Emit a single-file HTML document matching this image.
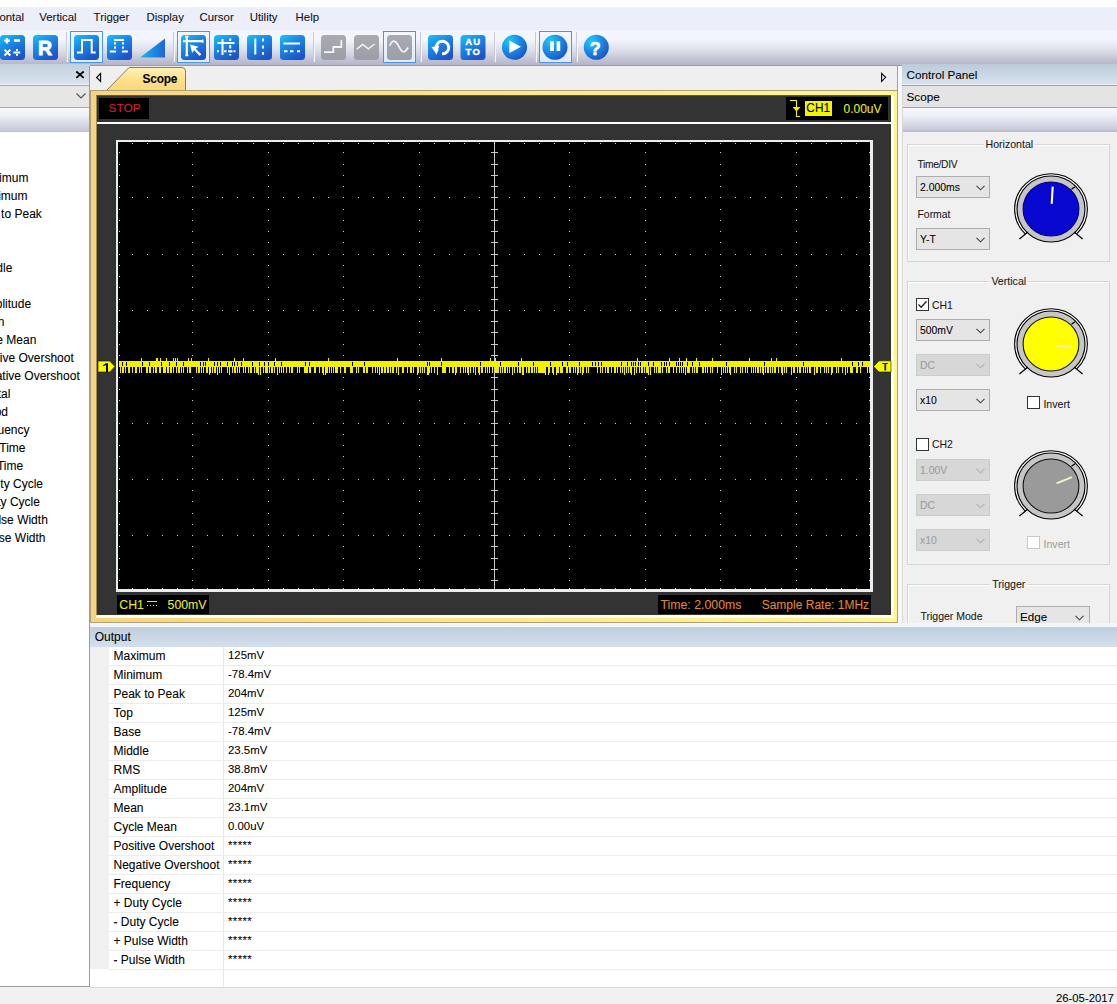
<!DOCTYPE html><html><head><meta charset="utf-8"><style>
html,body{margin:0;padding:0;}
body{width:1117px;height:1004px;overflow:hidden;position:relative;background:#f0f0f0;font-family:"Liberation Sans",sans-serif;}
.t{position:absolute;line-height:1;white-space:nowrap;-webkit-text-stroke:0.08px currentColor;}
.r{position:absolute;box-sizing:border-box;}
svg{position:absolute;overflow:visible;}
</style></head><body>

<div class="r" style="left:0px;top:0px;width:1117px;height:7px;background:#fdfdfe"></div>
<div class="r" style="left:0px;top:7px;width:1117px;height:23px;background:#eceef9"></div>
<div class="r" style="left:0px;top:30px;width:1117px;height:35px;background:linear-gradient(#f3f5fc 0px,#f4f6fc 9px,#eef0f8 12px,#d8dae6 22px,#c0c2d2 30px,#b4b6ca 35px)"></div>
<div class="r" style="left:90px;top:65px;width:812px;height:1px;background:#9a9aa6"></div>
<div class="t " style="left:-0.60px;top:12.25px;font-size:11.4px;color:#101018;">ontal</div>
<div class="t " style="left:39.30px;top:12.25px;font-size:11.4px;color:#101018;">Vertical</div>
<div class="t " style="left:93.60px;top:12.25px;font-size:11.4px;color:#101018;">Trigger</div>
<div class="t " style="left:146.50px;top:12.25px;font-size:11.4px;color:#101018;">Display</div>
<div class="t " style="left:199.50px;top:12.25px;font-size:11.4px;color:#101018;">Cursor</div>
<div class="t " style="left:249.70px;top:12.25px;font-size:11.4px;color:#101018;">Utility</div>
<div class="t " style="left:295.60px;top:12.25px;font-size:11.4px;color:#101018;">Help</div>
<svg style="left:0px;top:0px" width="1117" height="66" viewBox="0 0 1117 66">
<defs>
<linearGradient id="bl" x1="0" y1="0" x2="0.6" y2="1"><stop offset="0" stop-color="#19c3fb"/><stop offset="0.45" stop-color="#1a88e6"/><stop offset="1" stop-color="#1d55c6"/></linearGradient>
<linearGradient id="gr" x1="0" y1="0" x2="0" y2="1"><stop offset="0" stop-color="#a9aab2"/><stop offset="1" stop-color="#9c9da6"/></linearGradient>
<linearGradient id="sel" x1="0" y1="0" x2="0" y2="1"><stop offset="0" stop-color="#f4f8fe"/><stop offset="1" stop-color="#dfeaf8"/></linearGradient>
<radialGradient id="cb" cx="0.3" cy="0.25" r="0.85"><stop offset="0" stop-color="#20c8ff"/><stop offset="0.5" stop-color="#1a8ae8"/><stop offset="1" stop-color="#1c50c0"/></radialGradient>
</defs>
<rect x="66.0" y="32" width="1" height="30" fill="#c8cad6"/><rect x="67.0" y="32" width="1" height="30" fill="#f4f5fb"/>
<rect x="173.0" y="32" width="1" height="30" fill="#c8cad6"/><rect x="174.0" y="32" width="1" height="30" fill="#f4f5fb"/>
<rect x="313.0" y="32" width="1" height="30" fill="#c8cad6"/><rect x="314.0" y="32" width="1" height="30" fill="#f4f5fb"/>
<rect x="420.0" y="32" width="1" height="30" fill="#c8cad6"/><rect x="421.0" y="32" width="1" height="30" fill="#f4f5fb"/>
<rect x="494.0" y="32" width="1" height="30" fill="#c8cad6"/><rect x="495.0" y="32" width="1" height="30" fill="#f4f5fb"/>
<rect x="535.0" y="32" width="1" height="30" fill="#c8cad6"/><rect x="536.0" y="32" width="1" height="30" fill="#f4f5fb"/>
<rect x="576.0" y="32" width="1" height="30" fill="#c8cad6"/><rect x="577.0" y="32" width="1" height="30" fill="#f4f5fb"/>
<rect x="70.5" y="31.5" width="32" height="31" fill="url(#sel)" stroke="#4d94e6" stroke-width="1"/>
<rect x="177.5" y="31.5" width="32" height="31" fill="url(#sel)" stroke="#4d94e6" stroke-width="1"/>
<rect x="383.5" y="31.5" width="32" height="31" fill="url(#sel)" stroke="#4d94e6" stroke-width="1"/>
<rect x="539.5" y="31.5" width="32" height="31" fill="url(#sel)" stroke="#4d94e6" stroke-width="1"/>
<rect x="0" y="35" width="25" height="25" rx="3.5" fill="url(#bl)"/>
<path d="M4.2 40.7h5.7M7 38v5.4M14 40.5h6" stroke="#ffffff" stroke-width="2.3"/>
<path d="M4.5 49.6l5.8 5.9M10.3 49.6l-5.8 5.9M13.4 52.5h6.8" stroke="#ffffff" stroke-width="2"/><rect x="16" y="49" width="2" height="2" fill="#ffffff"/><rect x="16" y="53.8" width="2" height="2" fill="#ffffff"/>
<rect x="33" y="35" width="25" height="25" rx="3.5" fill="url(#bl)"/>
<text x="38" y="55.3" font-family="Liberation Sans" font-weight="bold" font-size="19.5" fill="#ffffff" stroke="#ffffff" stroke-width="0.9">R</text>
<rect x="74" y="35" width="25" height="25" rx="3.5" fill="url(#bl)"/>
<path d="M77 52.5h5v-12.5h9.7v12.5h4" stroke="#ffffff" stroke-width="2" fill="none"/>
<rect x="107" y="35" width="25" height="25" rx="3.5" fill="url(#bl)"/>
<path d="M114.2 40h9.7M109.8 51.5h6.3M121.9 51.5h6M115 42.3v2.2M115 46.6v2.1M123 42.3v2.2M123 46.6v2.1" stroke="#ffffff" stroke-width="2"/>
<linearGradient id="rg" x1="0" y1="0" x2="1" y2="0"><stop offset="0" stop-color="#1ab8f4"/><stop offset="1" stop-color="#1e66d4"/></linearGradient><path d="M140 57.5L165 38.5V57.5Z" fill="url(#rg)"/>
<rect x="181" y="35" width="25" height="25" rx="3.5" fill="url(#bl)"/>
<path d="M186.8 36.5v19M183 41.2h20" stroke="#ffffff" stroke-width="2.2"/><path d="M185.2 36.5h3.2M185.2 55.5h3.2M202.8 39.6v3.2" stroke="#ffffff" stroke-width="1.5"/>
<path d="M190 44.5l8.5 2.2-2.8 2 5.6 5.6-1.6 1.6-5.6-5.6-2 2.8z" fill="#ffffff"/>
<rect x="214" y="35" width="25" height="25" rx="3.5" fill="url(#bl)"/>
<path d="M222.5 39v16M217.5 43h17" stroke="#ffffff" stroke-width="2"/>
<path d="M230.2 38.5v2.5M230.2 45v3.5M230.2 50.5v2M230.2 54v1.5M217 51.2h2M224 51.2h2.5M228 51.2h4.5M233.5 51.2h2" stroke="#ffffff" stroke-width="2"/>
<rect x="247" y="35" width="25" height="25" rx="3.5" fill="url(#bl)"/>
<path d="M255.3 38.5v16" stroke="#ffffff" stroke-width="2"/><path d="M263 38.5v3M263 45.5v3M263 52v2.7" stroke="#ffffff" stroke-width="2"/>
<rect x="280" y="35" width="25" height="25" rx="3.5" fill="url(#bl)"/>
<path d="M283.5 43.5h16.5" stroke="#ffffff" stroke-width="2"/><path d="M284 51.2h3.5M290 51.2h3.5M297 51.2h3" stroke="#ffffff" stroke-width="2"/>
<rect x="321" y="35" width="25" height="25" rx="3.5" fill="url(#gr)"/>
<path d="M324 52.2h9.3v-5.2h8v-6.8" stroke="#f4f4f6" stroke-width="1.8" fill="none"/>
<rect x="354" y="35" width="25" height="25" rx="3.5" fill="url(#gr)"/>
<path d="M356.7 49.2L362.7 44.5L368.3 48.8L374.7 44" stroke="#f4f4f6" stroke-width="1.5" fill="none"/>
<rect x="387" y="35" width="25" height="25" rx="3.5" fill="url(#gr)"/>
<path d="M389.7 45.7C391 42 393 40.5 395 41.5C397.5 43 399 47 401 50C402.5 52 404.5 52.5 406 50.5C407 49.3 407.8 48.3 408.2 47.5" stroke="#f4f4f6" stroke-width="1.7" fill="none"/>
<rect x="428" y="35" width="25" height="25" rx="3.5" fill="url(#bl)"/>
<path d="M437.4 51.3A6.3 6.3 0 1 1 442 53.8" stroke="#ffffff" stroke-width="3" fill="none"/><path d="M431.5 47l7.8-1.2-2.7 9z" fill="#ffffff"/>
<rect x="460.5" y="35" width="25" height="25" rx="3.5" fill="url(#bl)"/>
<text x="465.3" y="44.8" font-family="Liberation Sans" font-weight="bold" font-size="9.5" fill="#ffffff" stroke="#ffffff" stroke-width="0.4" letter-spacing="1">AU</text>
<text x="465.6" y="54.8" font-family="Liberation Sans" font-weight="bold" font-size="9.5" fill="#ffffff" stroke="#ffffff" stroke-width="0.4" letter-spacing="1.2">TO</text>
<circle cx="514.5" cy="47.3" r="12.5" fill="url(#cb)"/>
<path d="M509.4 40.6v12.4l11.6-6.2z" fill="#ffffff"/>
<circle cx="555" cy="47.3" r="12.5" fill="url(#cb)"/>
<rect x="550.2" y="41.2" width="3.7" height="9.8" fill="#ffffff"/><rect x="556.6" y="41.2" width="3.6" height="9.8" fill="#ffffff"/>
<circle cx="596.3" cy="47.3" r="12.5" fill="url(#cb)"/>
<text x="589.7" y="54.5" font-family="Liberation Sans" font-weight="bold" font-size="18" fill="#ffffff" stroke="#ffffff" stroke-width="0.6">?</text>
</svg>
<div class="r" style="left:0px;top:64px;width:90px;height:20px;background:linear-gradient(#c4d0dc,#d9e3ef)"></div>
<div class="r" style="left:0px;top:84px;width:90px;height:1px;background:#eef2f8"></div>
<div class="r" style="left:0px;top:85px;width:90px;height:1px;background:#a5a9b0"></div>
<div class="r" style="left:0px;top:86px;width:90px;height:21px;background:#e6e6e6"></div>
<div class="r" style="left:0px;top:107px;width:90px;height:1px;background:#a8a8a8"></div>
<div class="r" style="left:0px;top:108px;width:90px;height:24px;background:linear-gradient(#f9f9fd,#eef0f6 30%,#c6c8d6 95%,#b8bac8)"></div>
<div class="r" style="left:0px;top:132px;width:89px;height:854px;background:#ffffff"></div>
<div class="r" style="left:0px;top:986px;width:90px;height:1px;background:#9c9c9c"></div>
<div class="r" style="left:89px;top:66px;width:1px;height:921px;background:#9c9ca4"></div>
<svg style="left:75px;top:70px" width="10" height="9" viewBox="0 0 10 9"><path d="M1.3 1.5 L8.7 7.9 M8.7 1.5 L1.3 7.9" stroke="#000" stroke-width="1.7"/></svg>
<svg style="left:76px;top:93px" width="10" height="6" viewBox="0 0 10 6"><path d="M0.5 0.5 L5 5 L9.5 0.5" stroke="#555" stroke-width="1.2" fill="none"/></svg>
<div style="position:absolute;left:0;top:132px;width:89px;height:854px;overflow:hidden">
<div class="t " style="left:-0.93px;top:40.14px;font-size:12px;color:#000;">imum</div>
<div class="t " style="left:-1.83px;top:58.14px;font-size:12px;color:#000;">imum</div>
<div class="t " style="left:1.11px;top:76.14px;font-size:12px;color:#000;">to Peak</div>
<div class="t " style="left:-3.71px;top:130.14px;font-size:12px;color:#000;">dle</div>
<div class="t " style="left:-4.26px;top:166.14px;font-size:12px;color:#000;">plitude</div>
<div class="t " style="left:-2.17px;top:184.14px;font-size:12px;color:#000;">n</div>
<div class="t " style="left:-3.73px;top:202.14px;font-size:12px;color:#000;">e Mean</div>
<div class="t " style="left:-3.57px;top:220.14px;font-size:12px;color:#000;">tive Overshoot</div>
<div class="t " style="left:-4.34px;top:238.14px;font-size:12px;color:#000;">ative Overshoot</div>
<div class="t " style="left:-2.27px;top:256.14px;font-size:12px;color:#000;">tal</div>
<div class="t " style="left:-5.35px;top:274.14px;font-size:12px;color:#000;">od</div>
<div class="t " style="left:-2.52px;top:292.14px;font-size:12px;color:#000;">uency</div>
<div class="t " style="left:-0.72px;top:310.14px;font-size:12px;color:#000;">Time</div>
<div class="t " style="left:-3.12px;top:328.14px;font-size:12px;color:#000;">Time</div>
<div class="t " style="left:0.33px;top:346.14px;font-size:12px;color:#000;">ty Cycle</div>
<div class="t " style="left:-2.77px;top:364.14px;font-size:12px;color:#000;">ty Cycle</div>
<div class="t " style="left:-1.55px;top:382.14px;font-size:12px;color:#000;">lse Width</div>
<div class="t " style="left:-1.18px;top:400.14px;font-size:12px;color:#000;">se Width</div>
</div>
<div class="r" style="left:90px;top:66px;width:808px;height:24px;background:#efefef"></div>
<div class="r" style="left:897px;top:66px;width:1px;height:24px;background:#a0a0a0"></div>
<svg style="left:95px;top:72px" width="8" height="11" viewBox="0 0 8 11"><path d="M5.6 1.5 L1.6 5.5 L5.6 9.5 Z" stroke="#000" stroke-width="1.1" fill="none"/></svg>
<svg style="left:880px;top:72px" width="8" height="11" viewBox="0 0 8 11"><path d="M1.6 1.3 L5.6 5.3 L1.6 9.3 Z" stroke="#000" stroke-width="1.1" fill="none"/></svg>
<svg style="left:105px;top:66px" width="84" height="26" viewBox="0 0 84 26"><defs><linearGradient id="tg" x1="0" y1="0" x2="0" y2="1"><stop offset="0" stop-color="#fff3b8"/><stop offset="0.5" stop-color="#fde08e"/><stop offset="1" stop-color="#fbd57a"/></linearGradient></defs><path d="M1 25 L24 1.5 L77 1.5 Q80.5 1.5 80.5 5 L80.5 25 Z" fill="url(#tg)" stroke="#8a7c58" stroke-width="1"/></svg>
<div class="t " style="left:142.50px;top:73.63px;font-size:11.9px;color:#000;font-weight:bold;letter-spacing:-0.2px">Scope</div>
<div class="r" style="left:90px;top:90px;width:808px;height:533px;background:linear-gradient(90deg,#f9d47e,#fde68a 50%,#fdf692);border:1px solid #aca178"></div>
<div class="r" style="left:891px;top:95px;width:3px;height:523px;background:#fffff0"></div>
<div class="r" style="left:96px;top:615px;width:798px;height:3px;background:#fffff0"></div>
<div class="r" style="left:96px;top:95px;width:795px;height:520px;background:#333333;border-left:1px solid #9c8a5c;border-top:1px solid #55585e"></div>
<div class="r" style="left:99px;top:98px;width:50px;height:21px;background:#000"></div>
<div class="t " style="left:108.60px;top:103.11px;font-size:11.8px;color:#d82030;">STOP</div>
<div class="r" style="left:786px;top:97px;width:102px;height:23px;background:#000"></div>
<svg style="left:788px;top:99px" width="14" height="20" viewBox="0 0 14 20"><path d="M2 1.5 H8.5 V17.5 H12" stroke="#f0f000" stroke-width="1.1" fill="none"/><path d="M4.5 8 H12.5 L8.5 12.5 Z" fill="#f0f000"/></svg>
<div class="r" style="left:805px;top:101px;width:27px;height:15px;background:#f4f400"></div>
<div class="t " style="left:806.30px;top:103.03px;font-size:11.9px;color:#000;">CH1</div>
<div class="t " style="left:843.50px;top:102.94px;font-size:12px;color:#e8e820;">0.00uV</div>
<div class="r" style="left:97px;top:122px;width:794px;height:2px;background:#fcfcfc"></div>
<div class="r" style="left:117px;top:595px;width:92px;height:19px;background:#000"></div>
<div class="t " style="left:119.30px;top:598.79px;font-size:12.3px;color:#e8e830;">CH1</div>
<svg style="left:146px;top:598px" width="12" height="10" viewBox="0 0 12 10" shape-rendering="crispEdges"><path d="M1 3.5 H11" stroke="#e8e830" stroke-width="1"/><path d="M1 7.5 H2 M4 7.5 H5 M7 7.5 H8 M10 7.5 H11" stroke="#e8e830" stroke-width="1"/></svg>
<div class="t " style="left:167.60px;top:598.79px;font-size:12.3px;color:#e8e830;">500mV</div>
<div class="r" style="left:658px;top:595px;width:213px;height:19px;background:#000"></div>
<div class="t " style="left:660.50px;top:598.99px;font-size:12.3px;color:#e08838;">Time: 2.000ms</div>
<div class="t " style="left:761.70px;top:599.24px;font-size:12.0px;color:#e08838;">Sample Rate: 1MHz</div>
<svg style="left:0px;top:0px" width="1117" height="1004" shape-rendering="crispEdges"><rect x="116" y="140" width="757" height="452" fill="#ebebf0"/><rect x="118" y="142" width="752" height="447" fill="#000"/><path d="M132 143h1v1h-1zM132 588h1v1h-1zM132 197h1v1h-1zM132 254h1v1h-1zM132 310h1v1h-1zM132 423h1v1h-1zM132 479h1v1h-1zM132 535h1v1h-1zM147 143h1v1h-1zM147 588h1v1h-1zM147 197h1v1h-1zM147 254h1v1h-1zM147 310h1v1h-1zM147 423h1v1h-1zM147 479h1v1h-1zM147 535h1v1h-1zM162 143h1v1h-1zM162 588h1v1h-1zM162 197h1v1h-1zM162 254h1v1h-1zM162 310h1v1h-1zM162 423h1v1h-1zM162 479h1v1h-1zM162 535h1v1h-1zM177 143h1v1h-1zM177 588h1v1h-1zM177 197h1v1h-1zM177 254h1v1h-1zM177 310h1v1h-1zM177 423h1v1h-1zM177 479h1v1h-1zM177 535h1v1h-1zM192 143h1v1h-1zM192 588h1v1h-1zM207 143h1v1h-1zM207 588h1v1h-1zM207 197h1v1h-1zM207 254h1v1h-1zM207 310h1v1h-1zM207 423h1v1h-1zM207 479h1v1h-1zM207 535h1v1h-1zM222 143h1v1h-1zM222 588h1v1h-1zM222 197h1v1h-1zM222 254h1v1h-1zM222 310h1v1h-1zM222 423h1v1h-1zM222 479h1v1h-1zM222 535h1v1h-1zM237 143h1v1h-1zM237 588h1v1h-1zM237 197h1v1h-1zM237 254h1v1h-1zM237 310h1v1h-1zM237 423h1v1h-1zM237 479h1v1h-1zM237 535h1v1h-1zM253 143h1v1h-1zM253 588h1v1h-1zM253 197h1v1h-1zM253 254h1v1h-1zM253 310h1v1h-1zM253 423h1v1h-1zM253 479h1v1h-1zM253 535h1v1h-1zM268 143h1v1h-1zM268 588h1v1h-1zM283 143h1v1h-1zM283 588h1v1h-1zM283 197h1v1h-1zM283 254h1v1h-1zM283 310h1v1h-1zM283 423h1v1h-1zM283 479h1v1h-1zM283 535h1v1h-1zM298 143h1v1h-1zM298 588h1v1h-1zM298 197h1v1h-1zM298 254h1v1h-1zM298 310h1v1h-1zM298 423h1v1h-1zM298 479h1v1h-1zM298 535h1v1h-1zM313 143h1v1h-1zM313 588h1v1h-1zM313 197h1v1h-1zM313 254h1v1h-1zM313 310h1v1h-1zM313 423h1v1h-1zM313 479h1v1h-1zM313 535h1v1h-1zM328 143h1v1h-1zM328 588h1v1h-1zM328 197h1v1h-1zM328 254h1v1h-1zM328 310h1v1h-1zM328 423h1v1h-1zM328 479h1v1h-1zM328 535h1v1h-1zM343 143h1v1h-1zM343 588h1v1h-1zM358 143h1v1h-1zM358 588h1v1h-1zM358 197h1v1h-1zM358 254h1v1h-1zM358 310h1v1h-1zM358 423h1v1h-1zM358 479h1v1h-1zM358 535h1v1h-1zM373 143h1v1h-1zM373 588h1v1h-1zM373 197h1v1h-1zM373 254h1v1h-1zM373 310h1v1h-1zM373 423h1v1h-1zM373 479h1v1h-1zM373 535h1v1h-1zM388 143h1v1h-1zM388 588h1v1h-1zM388 197h1v1h-1zM388 254h1v1h-1zM388 310h1v1h-1zM388 423h1v1h-1zM388 479h1v1h-1zM388 535h1v1h-1zM403 143h1v1h-1zM403 588h1v1h-1zM403 197h1v1h-1zM403 254h1v1h-1zM403 310h1v1h-1zM403 423h1v1h-1zM403 479h1v1h-1zM403 535h1v1h-1zM419 143h1v1h-1zM419 588h1v1h-1zM434 143h1v1h-1zM434 588h1v1h-1zM434 197h1v1h-1zM434 254h1v1h-1zM434 310h1v1h-1zM434 423h1v1h-1zM434 479h1v1h-1zM434 535h1v1h-1zM449 143h1v1h-1zM449 588h1v1h-1zM449 197h1v1h-1zM449 254h1v1h-1zM449 310h1v1h-1zM449 423h1v1h-1zM449 479h1v1h-1zM449 535h1v1h-1zM464 143h1v1h-1zM464 588h1v1h-1zM464 197h1v1h-1zM464 254h1v1h-1zM464 310h1v1h-1zM464 423h1v1h-1zM464 479h1v1h-1zM464 535h1v1h-1zM479 143h1v1h-1zM479 588h1v1h-1zM479 197h1v1h-1zM479 254h1v1h-1zM479 310h1v1h-1zM479 423h1v1h-1zM479 479h1v1h-1zM479 535h1v1h-1zM494 143h1v1h-1zM494 588h1v1h-1zM509 143h1v1h-1zM509 588h1v1h-1zM509 197h1v1h-1zM509 254h1v1h-1zM509 310h1v1h-1zM509 423h1v1h-1zM509 479h1v1h-1zM509 535h1v1h-1zM524 143h1v1h-1zM524 588h1v1h-1zM524 197h1v1h-1zM524 254h1v1h-1zM524 310h1v1h-1zM524 423h1v1h-1zM524 479h1v1h-1zM524 535h1v1h-1zM539 143h1v1h-1zM539 588h1v1h-1zM539 197h1v1h-1zM539 254h1v1h-1zM539 310h1v1h-1zM539 423h1v1h-1zM539 479h1v1h-1zM539 535h1v1h-1zM554 143h1v1h-1zM554 588h1v1h-1zM554 197h1v1h-1zM554 254h1v1h-1zM554 310h1v1h-1zM554 423h1v1h-1zM554 479h1v1h-1zM554 535h1v1h-1zM569 143h1v1h-1zM569 588h1v1h-1zM584 143h1v1h-1zM584 588h1v1h-1zM584 197h1v1h-1zM584 254h1v1h-1zM584 310h1v1h-1zM584 423h1v1h-1zM584 479h1v1h-1zM584 535h1v1h-1zM600 143h1v1h-1zM600 588h1v1h-1zM600 197h1v1h-1zM600 254h1v1h-1zM600 310h1v1h-1zM600 423h1v1h-1zM600 479h1v1h-1zM600 535h1v1h-1zM615 143h1v1h-1zM615 588h1v1h-1zM615 197h1v1h-1zM615 254h1v1h-1zM615 310h1v1h-1zM615 423h1v1h-1zM615 479h1v1h-1zM615 535h1v1h-1zM630 143h1v1h-1zM630 588h1v1h-1zM630 197h1v1h-1zM630 254h1v1h-1zM630 310h1v1h-1zM630 423h1v1h-1zM630 479h1v1h-1zM630 535h1v1h-1zM645 143h1v1h-1zM645 588h1v1h-1zM660 143h1v1h-1zM660 588h1v1h-1zM660 197h1v1h-1zM660 254h1v1h-1zM660 310h1v1h-1zM660 423h1v1h-1zM660 479h1v1h-1zM660 535h1v1h-1zM675 143h1v1h-1zM675 588h1v1h-1zM675 197h1v1h-1zM675 254h1v1h-1zM675 310h1v1h-1zM675 423h1v1h-1zM675 479h1v1h-1zM675 535h1v1h-1zM690 143h1v1h-1zM690 588h1v1h-1zM690 197h1v1h-1zM690 254h1v1h-1zM690 310h1v1h-1zM690 423h1v1h-1zM690 479h1v1h-1zM690 535h1v1h-1zM705 143h1v1h-1zM705 588h1v1h-1zM705 197h1v1h-1zM705 254h1v1h-1zM705 310h1v1h-1zM705 423h1v1h-1zM705 479h1v1h-1zM705 535h1v1h-1zM720 143h1v1h-1zM720 588h1v1h-1zM735 143h1v1h-1zM735 588h1v1h-1zM735 197h1v1h-1zM735 254h1v1h-1zM735 310h1v1h-1zM735 423h1v1h-1zM735 479h1v1h-1zM735 535h1v1h-1zM750 143h1v1h-1zM750 588h1v1h-1zM750 197h1v1h-1zM750 254h1v1h-1zM750 310h1v1h-1zM750 423h1v1h-1zM750 479h1v1h-1zM750 535h1v1h-1zM765 143h1v1h-1zM765 588h1v1h-1zM765 197h1v1h-1zM765 254h1v1h-1zM765 310h1v1h-1zM765 423h1v1h-1zM765 479h1v1h-1zM765 535h1v1h-1zM781 143h1v1h-1zM781 588h1v1h-1zM781 197h1v1h-1zM781 254h1v1h-1zM781 310h1v1h-1zM781 423h1v1h-1zM781 479h1v1h-1zM781 535h1v1h-1zM796 143h1v1h-1zM796 588h1v1h-1zM811 143h1v1h-1zM811 588h1v1h-1zM811 197h1v1h-1zM811 254h1v1h-1zM811 310h1v1h-1zM811 423h1v1h-1zM811 479h1v1h-1zM811 535h1v1h-1zM826 143h1v1h-1zM826 588h1v1h-1zM826 197h1v1h-1zM826 254h1v1h-1zM826 310h1v1h-1zM826 423h1v1h-1zM826 479h1v1h-1zM826 535h1v1h-1zM841 143h1v1h-1zM841 588h1v1h-1zM841 197h1v1h-1zM841 254h1v1h-1zM841 310h1v1h-1zM841 423h1v1h-1zM841 479h1v1h-1zM841 535h1v1h-1zM856 143h1v1h-1zM856 588h1v1h-1zM856 197h1v1h-1zM856 254h1v1h-1zM856 310h1v1h-1zM856 423h1v1h-1zM856 479h1v1h-1zM856 535h1v1h-1zM119 152h1v1h-1zM869 152h1v1h-1zM192 152h1v1h-1zM268 152h1v1h-1zM343 152h1v1h-1zM419 152h1v1h-1zM569 152h1v1h-1zM645 152h1v1h-1zM720 152h1v1h-1zM796 152h1v1h-1zM119 164h1v1h-1zM869 164h1v1h-1zM192 164h1v1h-1zM268 164h1v1h-1zM343 164h1v1h-1zM419 164h1v1h-1zM569 164h1v1h-1zM645 164h1v1h-1zM720 164h1v1h-1zM796 164h1v1h-1zM119 175h1v1h-1zM869 175h1v1h-1zM192 175h1v1h-1zM268 175h1v1h-1zM343 175h1v1h-1zM419 175h1v1h-1zM569 175h1v1h-1zM645 175h1v1h-1zM720 175h1v1h-1zM796 175h1v1h-1zM119 186h1v1h-1zM869 186h1v1h-1zM192 186h1v1h-1zM268 186h1v1h-1zM343 186h1v1h-1zM419 186h1v1h-1zM569 186h1v1h-1zM645 186h1v1h-1zM720 186h1v1h-1zM796 186h1v1h-1zM119 197h1v1h-1zM869 197h1v1h-1zM119 209h1v1h-1zM869 209h1v1h-1zM192 209h1v1h-1zM268 209h1v1h-1zM343 209h1v1h-1zM419 209h1v1h-1zM569 209h1v1h-1zM645 209h1v1h-1zM720 209h1v1h-1zM796 209h1v1h-1zM119 220h1v1h-1zM869 220h1v1h-1zM192 220h1v1h-1zM268 220h1v1h-1zM343 220h1v1h-1zM419 220h1v1h-1zM569 220h1v1h-1zM645 220h1v1h-1zM720 220h1v1h-1zM796 220h1v1h-1zM119 231h1v1h-1zM869 231h1v1h-1zM192 231h1v1h-1zM268 231h1v1h-1zM343 231h1v1h-1zM419 231h1v1h-1zM569 231h1v1h-1zM645 231h1v1h-1zM720 231h1v1h-1zM796 231h1v1h-1zM119 242h1v1h-1zM869 242h1v1h-1zM192 242h1v1h-1zM268 242h1v1h-1zM343 242h1v1h-1zM419 242h1v1h-1zM569 242h1v1h-1zM645 242h1v1h-1zM720 242h1v1h-1zM796 242h1v1h-1zM119 254h1v1h-1zM869 254h1v1h-1zM119 265h1v1h-1zM869 265h1v1h-1zM192 265h1v1h-1zM268 265h1v1h-1zM343 265h1v1h-1zM419 265h1v1h-1zM569 265h1v1h-1zM645 265h1v1h-1zM720 265h1v1h-1zM796 265h1v1h-1zM119 276h1v1h-1zM869 276h1v1h-1zM192 276h1v1h-1zM268 276h1v1h-1zM343 276h1v1h-1zM419 276h1v1h-1zM569 276h1v1h-1zM645 276h1v1h-1zM720 276h1v1h-1zM796 276h1v1h-1zM119 287h1v1h-1zM869 287h1v1h-1zM192 287h1v1h-1zM268 287h1v1h-1zM343 287h1v1h-1zM419 287h1v1h-1zM569 287h1v1h-1zM645 287h1v1h-1zM720 287h1v1h-1zM796 287h1v1h-1zM119 299h1v1h-1zM869 299h1v1h-1zM192 299h1v1h-1zM268 299h1v1h-1zM343 299h1v1h-1zM419 299h1v1h-1zM569 299h1v1h-1zM645 299h1v1h-1zM720 299h1v1h-1zM796 299h1v1h-1zM119 310h1v1h-1zM869 310h1v1h-1zM119 321h1v1h-1zM869 321h1v1h-1zM192 321h1v1h-1zM268 321h1v1h-1zM343 321h1v1h-1zM419 321h1v1h-1zM569 321h1v1h-1zM645 321h1v1h-1zM720 321h1v1h-1zM796 321h1v1h-1zM119 332h1v1h-1zM869 332h1v1h-1zM192 332h1v1h-1zM268 332h1v1h-1zM343 332h1v1h-1zM419 332h1v1h-1zM569 332h1v1h-1zM645 332h1v1h-1zM720 332h1v1h-1zM796 332h1v1h-1zM119 344h1v1h-1zM869 344h1v1h-1zM192 344h1v1h-1zM268 344h1v1h-1zM343 344h1v1h-1zM419 344h1v1h-1zM569 344h1v1h-1zM645 344h1v1h-1zM720 344h1v1h-1zM796 344h1v1h-1zM119 355h1v1h-1zM869 355h1v1h-1zM192 355h1v1h-1zM268 355h1v1h-1zM343 355h1v1h-1zM419 355h1v1h-1zM569 355h1v1h-1zM645 355h1v1h-1zM720 355h1v1h-1zM796 355h1v1h-1zM119 366h1v1h-1zM869 366h1v1h-1zM119 377h1v1h-1zM869 377h1v1h-1zM192 377h1v1h-1zM268 377h1v1h-1zM343 377h1v1h-1zM419 377h1v1h-1zM569 377h1v1h-1zM645 377h1v1h-1zM720 377h1v1h-1zM796 377h1v1h-1zM119 389h1v1h-1zM869 389h1v1h-1zM192 389h1v1h-1zM268 389h1v1h-1zM343 389h1v1h-1zM419 389h1v1h-1zM569 389h1v1h-1zM645 389h1v1h-1zM720 389h1v1h-1zM796 389h1v1h-1zM119 400h1v1h-1zM869 400h1v1h-1zM192 400h1v1h-1zM268 400h1v1h-1zM343 400h1v1h-1zM419 400h1v1h-1zM569 400h1v1h-1zM645 400h1v1h-1zM720 400h1v1h-1zM796 400h1v1h-1zM119 411h1v1h-1zM869 411h1v1h-1zM192 411h1v1h-1zM268 411h1v1h-1zM343 411h1v1h-1zM419 411h1v1h-1zM569 411h1v1h-1zM645 411h1v1h-1zM720 411h1v1h-1zM796 411h1v1h-1zM119 423h1v1h-1zM869 423h1v1h-1zM119 434h1v1h-1zM869 434h1v1h-1zM192 434h1v1h-1zM268 434h1v1h-1zM343 434h1v1h-1zM419 434h1v1h-1zM569 434h1v1h-1zM645 434h1v1h-1zM720 434h1v1h-1zM796 434h1v1h-1zM119 445h1v1h-1zM869 445h1v1h-1zM192 445h1v1h-1zM268 445h1v1h-1zM343 445h1v1h-1zM419 445h1v1h-1zM569 445h1v1h-1zM645 445h1v1h-1zM720 445h1v1h-1zM796 445h1v1h-1zM119 456h1v1h-1zM869 456h1v1h-1zM192 456h1v1h-1zM268 456h1v1h-1zM343 456h1v1h-1zM419 456h1v1h-1zM569 456h1v1h-1zM645 456h1v1h-1zM720 456h1v1h-1zM796 456h1v1h-1zM119 468h1v1h-1zM869 468h1v1h-1zM192 468h1v1h-1zM268 468h1v1h-1zM343 468h1v1h-1zM419 468h1v1h-1zM569 468h1v1h-1zM645 468h1v1h-1zM720 468h1v1h-1zM796 468h1v1h-1zM119 479h1v1h-1zM869 479h1v1h-1zM119 490h1v1h-1zM869 490h1v1h-1zM192 490h1v1h-1zM268 490h1v1h-1zM343 490h1v1h-1zM419 490h1v1h-1zM569 490h1v1h-1zM645 490h1v1h-1zM720 490h1v1h-1zM796 490h1v1h-1zM119 501h1v1h-1zM869 501h1v1h-1zM192 501h1v1h-1zM268 501h1v1h-1zM343 501h1v1h-1zM419 501h1v1h-1zM569 501h1v1h-1zM645 501h1v1h-1zM720 501h1v1h-1zM796 501h1v1h-1zM119 513h1v1h-1zM869 513h1v1h-1zM192 513h1v1h-1zM268 513h1v1h-1zM343 513h1v1h-1zM419 513h1v1h-1zM569 513h1v1h-1zM645 513h1v1h-1zM720 513h1v1h-1zM796 513h1v1h-1zM119 524h1v1h-1zM869 524h1v1h-1zM192 524h1v1h-1zM268 524h1v1h-1zM343 524h1v1h-1zM419 524h1v1h-1zM569 524h1v1h-1zM645 524h1v1h-1zM720 524h1v1h-1zM796 524h1v1h-1zM119 535h1v1h-1zM869 535h1v1h-1zM119 546h1v1h-1zM869 546h1v1h-1zM192 546h1v1h-1zM268 546h1v1h-1zM343 546h1v1h-1zM419 546h1v1h-1zM569 546h1v1h-1zM645 546h1v1h-1zM720 546h1v1h-1zM796 546h1v1h-1zM119 558h1v1h-1zM869 558h1v1h-1zM192 558h1v1h-1zM268 558h1v1h-1zM343 558h1v1h-1zM419 558h1v1h-1zM569 558h1v1h-1zM645 558h1v1h-1zM720 558h1v1h-1zM796 558h1v1h-1zM119 569h1v1h-1zM869 569h1v1h-1zM192 569h1v1h-1zM268 569h1v1h-1zM343 569h1v1h-1zM419 569h1v1h-1zM569 569h1v1h-1zM645 569h1v1h-1zM720 569h1v1h-1zM796 569h1v1h-1zM119 580h1v1h-1zM869 580h1v1h-1zM192 580h1v1h-1zM268 580h1v1h-1zM343 580h1v1h-1zM419 580h1v1h-1zM569 580h1v1h-1zM645 580h1v1h-1zM720 580h1v1h-1zM796 580h1v1h-1zM192 197h1v1h-1zM192 254h1v1h-1zM192 310h1v1h-1zM192 423h1v1h-1zM192 479h1v1h-1zM192 535h1v1h-1zM268 197h1v1h-1zM268 254h1v1h-1zM268 310h1v1h-1zM268 423h1v1h-1zM268 479h1v1h-1zM268 535h1v1h-1zM343 197h1v1h-1zM343 254h1v1h-1zM343 310h1v1h-1zM343 423h1v1h-1zM343 479h1v1h-1zM343 535h1v1h-1zM419 197h1v1h-1zM419 254h1v1h-1zM419 310h1v1h-1zM419 423h1v1h-1zM419 479h1v1h-1zM419 535h1v1h-1zM569 197h1v1h-1zM569 254h1v1h-1zM569 310h1v1h-1zM569 423h1v1h-1zM569 479h1v1h-1zM569 535h1v1h-1zM645 197h1v1h-1zM645 254h1v1h-1zM645 310h1v1h-1zM645 423h1v1h-1zM645 479h1v1h-1zM645 535h1v1h-1zM720 197h1v1h-1zM720 254h1v1h-1zM720 310h1v1h-1zM720 423h1v1h-1zM720 479h1v1h-1zM720 535h1v1h-1zM796 197h1v1h-1zM796 254h1v1h-1zM796 310h1v1h-1zM796 423h1v1h-1zM796 479h1v1h-1zM796 535h1v1h-1z" fill="#d0d0d0"/><rect x="494" y="142" width="1" height="447" fill="#c8c8c8"/><rect x="119" y="366" width="751" height="1" fill="#c8c8c8"/><path d="M491 152h7v1h-7zM491 164h7v1h-7zM491 175h7v1h-7zM491 186h7v1h-7zM491 197h7v1h-7zM491 209h7v1h-7zM491 220h7v1h-7zM491 231h7v1h-7zM491 242h7v1h-7zM491 254h7v1h-7zM491 265h7v1h-7zM491 276h7v1h-7zM491 287h7v1h-7zM491 299h7v1h-7zM491 310h7v1h-7zM491 321h7v1h-7zM491 332h7v1h-7zM491 344h7v1h-7zM491 355h7v1h-7zM491 366h7v1h-7zM491 377h7v1h-7zM491 389h7v1h-7zM491 400h7v1h-7zM491 411h7v1h-7zM491 423h7v1h-7zM491 434h7v1h-7zM491 445h7v1h-7zM491 456h7v1h-7zM491 468h7v1h-7zM491 479h7v1h-7zM491 490h7v1h-7zM491 501h7v1h-7zM491 513h7v1h-7zM491 524h7v1h-7zM491 535h7v1h-7zM491 546h7v1h-7zM491 558h7v1h-7zM491 569h7v1h-7zM491 580h7v1h-7z" fill="#c8c8c8"/><path d="M119 361h1v6h-1zM120 361h1v6h-1zM120 367h1v6h-1zM121 361h1v6h-1zM122 361h1v1h-1z M122 366h1v1h-1zM122 367h1v6h-1zM123 361h1v6h-1zM123 367h1v6h-1zM124 361h1v6h-1zM125 361h1v6h-1zM125 367h1v6h-1zM126 361h1v1h-1z M126 366h1v1h-1zM127 361h1v6h-1zM128 361h1v6h-1zM128 367h1v6h-1zM129 361h1v6h-1zM129 367h1v6h-1zM130 361h1v6h-1zM131 361h1v6h-1zM132 361h1v6h-1zM132 367h1v6h-1zM133 361h1v6h-1zM134 361h1v6h-1zM135 361h1v6h-1zM135 367h1v6h-1zM136 361h1v6h-1zM136 367h1v6h-1zM137 361h1v6h-1zM138 361h1v6h-1zM139 361h1v6h-1zM139 367h1v6h-1zM140 361h1v6h-1zM141 361h1v6h-1zM141 367h1v6h-1zM141 358h1v3h-1zM142 361h1v1h-1z M142 366h1v1h-1zM143 361h1v6h-1zM144 361h1v6h-1zM145 361h1v6h-1zM146 361h1v6h-1zM146 367h1v6h-1zM147 361h1v6h-1zM147 367h1v6h-1zM148 361h1v6h-1zM149 361h1v1h-1z M149 366h1v1h-1zM149 367h1v6h-1zM150 361h1v6h-1zM150 367h1v6h-1zM151 361h1v6h-1zM152 361h1v6h-1zM153 361h1v6h-1zM153 367h1v6h-1zM154 361h1v6h-1zM155 361h1v6h-1zM155 367h1v6h-1zM156 361h1v6h-1zM156 367h1v6h-1zM156 358h1v3h-1zM157 361h1v6h-1zM157 358h1v3h-1zM158 361h1v6h-1zM159 361h1v6h-1zM159 367h1v6h-1zM160 361h1v6h-1zM160 367h1v6h-1zM160 358h1v3h-1zM161 361h1v1h-1z M161 366h1v1h-1zM162 361h1v6h-1zM163 361h1v6h-1zM163 367h1v6h-1zM164 361h1v6h-1zM164 367h1v6h-1zM165 361h1v6h-1zM165 367h1v6h-1zM166 361h1v6h-1zM166 358h1v3h-1zM167 361h1v6h-1zM167 367h1v6h-1zM168 361h1v6h-1zM168 367h1v6h-1zM169 361h1v1h-1z M169 366h1v1h-1zM170 361h1v6h-1zM170 367h1v6h-1zM171 361h1v6h-1zM171 367h1v6h-1zM172 361h1v6h-1zM173 361h1v6h-1zM173 367h1v6h-1zM173 358h1v3h-1zM174 361h1v6h-1zM175 361h1v6h-1zM175 358h1v3h-1zM176 361h1v1h-1z M176 366h1v1h-1zM176 367h1v6h-1zM177 361h1v6h-1zM177 358h1v3h-1zM178 361h1v6h-1zM178 367h1v6h-1zM179 361h1v6h-1zM179 367h1v6h-1zM180 361h1v6h-1zM181 361h1v6h-1zM181 367h1v6h-1zM182 361h1v6h-1zM183 361h1v1h-1z M183 366h1v1h-1zM183 367h1v6h-1zM184 361h1v6h-1zM185 361h1v6h-1zM186 361h1v6h-1zM187 361h1v6h-1zM187 367h1v6h-1zM188 361h1v6h-1zM188 358h1v3h-1zM189 361h1v6h-1zM189 367h1v6h-1zM190 361h1v6h-1zM190 367h1v6h-1zM191 361h1v6h-1zM191 358h1v3h-1zM192 361h1v6h-1zM193 361h1v6h-1zM194 361h1v6h-1zM195 361h1v6h-1zM196 361h1v6h-1zM196 367h1v6h-1zM197 361h1v6h-1zM198 361h1v6h-1zM198 367h1v6h-1zM199 361h1v6h-1zM199 367h1v6h-1zM200 361h1v1h-1z M200 366h1v1h-1zM201 361h1v6h-1zM201 367h1v6h-1zM202 361h1v6h-1zM203 361h1v1h-1z M203 366h1v1h-1zM203 367h1v6h-1zM204 361h1v6h-1zM205 361h1v1h-1z M205 366h1v1h-1zM206 361h1v6h-1zM206 367h1v6h-1zM207 361h1v6h-1zM207 367h1v6h-1zM208 361h1v6h-1zM208 358h1v3h-1zM209 361h1v6h-1zM209 367h1v8h-1zM210 361h1v6h-1zM210 367h1v6h-1zM211 361h1v6h-1zM212 361h1v6h-1zM212 367h1v6h-1zM213 361h1v6h-1zM214 361h1v1h-1z M214 366h1v1h-1zM214 367h1v6h-1zM215 361h1v6h-1zM215 367h1v6h-1zM216 361h1v6h-1zM217 361h1v1h-1z M217 366h1v1h-1zM217 367h1v8h-1zM218 361h1v6h-1zM219 361h1v6h-1zM219 367h1v6h-1zM220 361h1v1h-1z M220 366h1v1h-1zM221 361h1v6h-1zM221 367h1v6h-1zM222 361h1v6h-1zM223 361h1v6h-1zM224 361h1v6h-1zM225 361h1v6h-1zM226 361h1v6h-1zM227 361h1v1h-1z M227 366h1v1h-1zM227 367h1v6h-1zM228 361h1v6h-1zM229 361h1v6h-1zM229 367h1v8h-1zM230 361h1v6h-1zM231 361h1v6h-1zM232 361h1v1h-1z M232 366h1v1h-1zM232 367h1v6h-1zM233 361h1v6h-1zM234 361h1v1h-1z M234 366h1v1h-1zM234 367h1v6h-1zM234 358h1v3h-1zM235 361h1v6h-1zM235 367h1v6h-1zM236 361h1v6h-1zM237 361h1v1h-1z M237 366h1v1h-1zM237 367h1v6h-1zM238 361h1v6h-1zM239 361h1v6h-1zM239 367h1v6h-1zM240 361h1v6h-1zM241 361h1v1h-1z M241 366h1v1h-1zM242 361h1v6h-1zM243 361h1v6h-1zM243 367h1v6h-1zM243 358h1v3h-1zM244 361h1v6h-1zM245 361h1v6h-1zM245 367h1v6h-1zM246 361h1v6h-1zM247 361h1v6h-1zM248 361h1v6h-1zM248 367h1v6h-1zM249 361h1v6h-1zM250 361h1v6h-1zM250 367h1v6h-1zM251 361h1v6h-1zM251 367h1v6h-1zM252 361h1v1h-1z M252 366h1v1h-1zM253 361h1v6h-1zM254 361h1v6h-1zM254 367h1v6h-1zM255 361h1v6h-1zM256 361h1v6h-1zM256 367h1v6h-1zM257 361h1v6h-1zM257 367h1v6h-1zM258 361h1v6h-1zM258 367h1v8h-1zM259 361h1v1h-1z M259 366h1v1h-1zM260 361h1v6h-1zM260 367h1v8h-1zM261 361h1v6h-1zM262 361h1v6h-1zM263 361h1v6h-1zM263 367h1v6h-1zM264 361h1v1h-1z M264 366h1v1h-1zM265 361h1v6h-1zM265 367h1v6h-1zM266 361h1v6h-1zM266 367h1v6h-1zM267 361h1v6h-1zM267 367h1v6h-1zM268 361h1v1h-1z M268 366h1v1h-1zM269 361h1v6h-1zM269 367h1v6h-1zM270 361h1v6h-1zM271 361h1v6h-1zM271 367h1v6h-1zM272 361h1v6h-1zM272 367h1v6h-1zM273 361h1v6h-1zM274 361h1v1h-1z M274 366h1v1h-1zM274 367h1v6h-1zM275 361h1v6h-1zM275 358h1v3h-1zM276 361h1v6h-1zM277 361h1v6h-1zM277 367h1v8h-1zM278 361h1v6h-1zM279 361h1v6h-1zM279 367h1v6h-1zM280 361h1v6h-1zM281 361h1v1h-1z M281 366h1v1h-1zM281 367h1v6h-1zM282 361h1v6h-1zM283 361h1v6h-1zM283 367h1v6h-1zM284 361h1v6h-1zM285 361h1v6h-1zM286 361h1v6h-1zM286 367h1v6h-1zM287 361h1v6h-1zM288 361h1v6h-1zM289 361h1v6h-1zM289 367h1v6h-1zM290 361h1v6h-1zM291 361h1v6h-1zM291 367h1v6h-1zM292 361h1v6h-1zM292 367h1v6h-1zM293 361h1v6h-1zM294 361h1v6h-1zM295 361h1v6h-1zM296 361h1v6h-1zM297 361h1v6h-1zM297 367h1v6h-1zM298 361h1v6h-1zM299 361h1v6h-1zM299 367h1v6h-1zM300 361h1v6h-1zM301 361h1v6h-1zM302 361h1v6h-1zM303 361h1v6h-1zM304 361h1v6h-1zM304 367h1v6h-1zM305 361h1v1h-1z M305 366h1v1h-1zM305 367h1v6h-1zM306 361h1v6h-1zM306 367h1v6h-1zM307 361h1v6h-1zM307 367h1v6h-1zM308 361h1v6h-1zM309 361h1v1h-1z M309 366h1v1h-1zM309 367h1v6h-1zM310 361h1v6h-1zM310 367h1v6h-1zM311 361h1v6h-1zM312 361h1v6h-1zM313 361h1v6h-1zM314 361h1v6h-1zM314 367h1v6h-1zM315 361h1v6h-1zM315 367h1v6h-1zM316 361h1v6h-1zM317 361h1v6h-1zM318 361h1v6h-1zM319 361h1v6h-1zM319 367h1v6h-1zM320 361h1v6h-1zM321 361h1v6h-1zM322 361h1v6h-1zM322 367h1v6h-1zM323 361h1v6h-1zM323 367h1v8h-1zM324 361h1v6h-1zM325 361h1v6h-1zM325 367h1v8h-1zM326 361h1v6h-1zM326 367h1v6h-1zM327 361h1v6h-1zM327 367h1v6h-1zM328 361h1v6h-1zM328 358h1v3h-1zM329 361h1v6h-1zM329 367h1v6h-1zM330 361h1v6h-1zM331 361h1v6h-1zM331 367h1v6h-1zM332 361h1v6h-1zM333 361h1v6h-1zM333 367h1v6h-1zM334 361h1v6h-1zM335 361h1v6h-1zM335 367h1v6h-1zM336 361h1v6h-1zM336 367h1v6h-1zM337 361h1v6h-1zM337 367h1v6h-1zM338 361h1v6h-1zM339 361h1v6h-1zM340 361h1v6h-1zM340 367h1v6h-1zM341 361h1v6h-1zM342 361h1v6h-1zM343 361h1v6h-1zM344 361h1v6h-1zM344 367h1v6h-1zM345 361h1v6h-1zM345 367h1v6h-1zM346 361h1v6h-1zM347 361h1v6h-1zM348 361h1v6h-1zM349 361h1v6h-1zM350 361h1v6h-1zM350 367h1v6h-1zM351 361h1v6h-1zM351 367h1v6h-1zM352 361h1v1h-1z M352 366h1v1h-1zM352 367h1v6h-1zM353 361h1v6h-1zM354 361h1v6h-1zM355 361h1v6h-1zM356 361h1v6h-1zM356 367h1v6h-1zM357 361h1v6h-1zM358 361h1v6h-1zM358 367h1v6h-1zM359 361h1v6h-1zM360 361h1v6h-1zM361 361h1v6h-1zM362 361h1v6h-1zM363 361h1v6h-1zM363 367h1v6h-1zM364 361h1v1h-1z M364 366h1v1h-1zM364 367h1v6h-1zM365 361h1v6h-1zM366 361h1v6h-1zM366 367h1v6h-1zM367 361h1v6h-1zM367 367h1v6h-1zM368 361h1v6h-1zM369 361h1v6h-1zM370 361h1v6h-1zM371 361h1v6h-1zM372 361h1v6h-1zM372 367h1v6h-1zM373 361h1v6h-1zM374 361h1v6h-1zM375 361h1v6h-1zM375 367h1v6h-1zM376 361h1v6h-1zM377 361h1v6h-1zM377 367h1v6h-1zM378 361h1v6h-1zM379 361h1v6h-1zM379 367h1v8h-1zM380 361h1v6h-1zM381 361h1v6h-1zM381 367h1v6h-1zM382 361h1v6h-1zM382 367h1v6h-1zM383 361h1v6h-1zM384 361h1v6h-1zM384 367h1v6h-1zM385 361h1v6h-1zM385 367h1v6h-1zM386 361h1v6h-1zM387 361h1v6h-1zM387 367h1v6h-1zM388 361h1v6h-1zM388 367h1v6h-1zM389 361h1v6h-1zM390 361h1v6h-1zM390 367h1v6h-1zM391 361h1v6h-1zM392 361h1v6h-1zM392 367h1v6h-1zM393 361h1v6h-1zM393 367h1v6h-1zM394 361h1v6h-1zM395 361h1v6h-1zM396 361h1v6h-1zM396 367h1v6h-1zM397 361h1v6h-1zM397 358h1v3h-1zM398 361h1v6h-1zM398 367h1v8h-1zM399 361h1v6h-1zM400 361h1v6h-1zM401 361h1v6h-1zM402 361h1v6h-1zM402 367h1v6h-1zM403 361h1v6h-1zM403 367h1v6h-1zM404 361h1v6h-1zM405 361h1v6h-1zM406 361h1v6h-1zM407 361h1v6h-1zM407 367h1v6h-1zM408 361h1v6h-1zM409 361h1v6h-1zM410 361h1v6h-1zM410 367h1v6h-1zM411 361h1v6h-1zM411 367h1v6h-1zM412 361h1v6h-1zM413 361h1v6h-1zM413 367h1v6h-1zM414 361h1v6h-1zM415 361h1v6h-1zM416 361h1v6h-1zM417 361h1v6h-1zM417 367h1v8h-1zM418 361h1v6h-1zM418 367h1v6h-1zM419 361h1v6h-1zM420 361h1v6h-1zM420 367h1v6h-1zM421 361h1v6h-1zM422 361h1v6h-1zM422 367h1v6h-1zM423 361h1v6h-1zM424 361h1v6h-1zM424 367h1v6h-1zM425 361h1v6h-1zM426 361h1v6h-1zM427 361h1v1h-1z M427 366h1v1h-1zM427 367h1v8h-1zM428 361h1v6h-1zM428 367h1v8h-1zM429 361h1v1h-1z M429 366h1v1h-1zM429 367h1v6h-1zM430 361h1v6h-1zM431 361h1v6h-1zM431 367h1v6h-1zM432 361h1v6h-1zM433 361h1v6h-1zM434 361h1v6h-1zM434 367h1v6h-1zM435 361h1v6h-1zM436 361h1v6h-1zM437 361h1v6h-1zM437 367h1v8h-1zM438 361h1v6h-1zM439 361h1v6h-1zM440 361h1v6h-1zM441 361h1v1h-1z M441 366h1v1h-1zM441 358h1v3h-1zM442 361h1v6h-1zM442 367h1v6h-1zM443 361h1v6h-1zM443 367h1v6h-1zM444 361h1v6h-1zM444 367h1v6h-1zM445 361h1v6h-1zM445 367h1v6h-1zM446 361h1v6h-1zM447 361h1v6h-1zM448 361h1v6h-1zM449 361h1v6h-1zM449 367h1v6h-1zM450 361h1v6h-1zM451 361h1v6h-1zM452 361h1v6h-1zM452 367h1v6h-1zM453 361h1v6h-1zM453 367h1v6h-1zM454 361h1v6h-1zM455 361h1v6h-1zM455 367h1v8h-1zM456 361h1v6h-1zM456 367h1v6h-1zM457 361h1v6h-1zM458 361h1v6h-1zM459 361h1v6h-1zM460 361h1v6h-1zM460 367h1v6h-1zM461 361h1v6h-1zM462 361h1v6h-1zM463 361h1v6h-1zM463 367h1v6h-1zM464 361h1v6h-1zM465 361h1v6h-1zM465 367h1v6h-1zM466 361h1v6h-1zM467 361h1v6h-1zM467 367h1v6h-1zM468 361h1v6h-1zM468 367h1v8h-1zM469 361h1v6h-1zM470 361h1v6h-1zM470 367h1v6h-1zM471 361h1v6h-1zM472 361h1v6h-1zM473 361h1v6h-1zM473 367h1v6h-1zM474 361h1v6h-1zM475 361h1v6h-1zM475 367h1v8h-1zM476 361h1v6h-1zM477 361h1v6h-1zM478 361h1v6h-1zM478 367h1v6h-1zM479 361h1v6h-1zM479 367h1v8h-1zM480 361h1v1h-1z M480 366h1v1h-1zM481 361h1v6h-1zM481 367h1v6h-1zM482 361h1v6h-1zM482 367h1v6h-1zM483 361h1v6h-1zM484 361h1v6h-1zM485 361h1v6h-1zM485 367h1v6h-1zM486 361h1v6h-1zM487 361h1v6h-1zM487 367h1v6h-1zM488 361h1v6h-1zM489 361h1v6h-1zM489 367h1v6h-1zM490 361h1v6h-1zM490 358h1v3h-1zM491 361h1v6h-1zM492 361h1v6h-1zM492 367h1v6h-1zM493 361h1v6h-1zM494 361h1v6h-1zM495 361h1v6h-1zM495 367h1v6h-1zM495 358h1v3h-1zM496 361h1v6h-1zM496 367h1v6h-1zM497 361h1v6h-1zM497 367h1v6h-1zM498 361h1v6h-1zM498 367h1v6h-1zM499 361h1v6h-1zM500 361h1v1h-1z M500 366h1v1h-1zM500 367h1v6h-1zM501 361h1v6h-1zM502 361h1v6h-1zM502 367h1v6h-1zM503 361h1v6h-1zM504 361h1v6h-1zM504 367h1v6h-1zM505 361h1v6h-1zM505 367h1v6h-1zM506 361h1v6h-1zM507 361h1v6h-1zM507 367h1v6h-1zM508 361h1v6h-1zM509 361h1v6h-1zM509 367h1v6h-1zM510 361h1v6h-1zM511 361h1v6h-1zM512 361h1v6h-1zM512 367h1v8h-1zM513 361h1v6h-1zM514 361h1v6h-1zM514 367h1v6h-1zM515 361h1v6h-1zM516 361h1v6h-1zM517 361h1v6h-1zM517 367h1v6h-1zM518 361h1v1h-1z M518 366h1v1h-1zM519 361h1v6h-1zM519 367h1v6h-1zM520 361h1v6h-1zM520 367h1v6h-1zM521 361h1v6h-1zM521 358h1v3h-1zM522 361h1v6h-1zM522 367h1v8h-1zM523 361h1v6h-1zM523 367h1v8h-1zM524 361h1v6h-1zM525 361h1v6h-1zM526 361h1v6h-1zM526 367h1v6h-1zM527 361h1v6h-1zM528 361h1v6h-1zM528 367h1v6h-1zM529 361h1v6h-1zM529 367h1v6h-1zM530 361h1v6h-1zM531 361h1v6h-1zM531 367h1v6h-1zM532 361h1v6h-1zM532 367h1v6h-1zM533 361h1v1h-1z M533 366h1v1h-1zM534 361h1v6h-1zM534 367h1v6h-1zM535 361h1v6h-1zM536 361h1v6h-1zM536 367h1v6h-1zM537 361h1v6h-1zM538 361h1v6h-1zM538 367h1v6h-1zM539 361h1v6h-1zM539 367h1v6h-1zM540 361h1v6h-1zM540 367h1v6h-1zM541 361h1v6h-1zM541 367h1v6h-1zM542 361h1v6h-1zM542 367h1v6h-1zM543 361h1v6h-1zM543 367h1v6h-1zM544 361h1v6h-1zM544 367h1v6h-1zM545 361h1v6h-1zM545 367h1v8h-1zM546 361h1v6h-1zM547 361h1v6h-1zM548 361h1v6h-1zM548 367h1v8h-1zM549 361h1v6h-1zM549 367h1v6h-1zM550 361h1v1h-1z M550 366h1v1h-1zM551 361h1v6h-1zM552 361h1v6h-1zM552 367h1v6h-1zM553 361h1v6h-1zM553 367h1v8h-1zM554 361h1v6h-1zM555 361h1v6h-1zM556 361h1v6h-1zM556 367h1v8h-1zM557 361h1v6h-1zM557 367h1v6h-1zM558 361h1v6h-1zM558 367h1v6h-1zM559 361h1v6h-1zM560 361h1v6h-1zM560 367h1v6h-1zM561 361h1v6h-1zM561 367h1v6h-1zM562 361h1v1h-1z M562 366h1v1h-1zM562 367h1v6h-1zM563 361h1v6h-1zM564 361h1v6h-1zM565 361h1v6h-1zM566 361h1v6h-1zM566 367h1v6h-1zM567 361h1v1h-1z M567 366h1v1h-1zM567 367h1v6h-1zM568 361h1v6h-1zM569 361h1v6h-1zM569 367h1v6h-1zM570 361h1v6h-1zM570 367h1v6h-1zM571 361h1v6h-1zM572 361h1v6h-1zM573 361h1v6h-1zM573 367h1v6h-1zM574 361h1v6h-1zM575 361h1v6h-1zM575 367h1v6h-1zM576 361h1v6h-1zM577 361h1v6h-1zM577 367h1v8h-1zM578 361h1v6h-1zM578 367h1v6h-1zM579 361h1v1h-1z M579 366h1v1h-1zM580 361h1v6h-1zM580 367h1v6h-1zM581 361h1v6h-1zM582 361h1v6h-1zM582 367h1v8h-1zM583 361h1v6h-1zM583 367h1v6h-1zM584 361h1v6h-1zM585 361h1v6h-1zM586 361h1v6h-1zM586 367h1v6h-1zM587 361h1v6h-1zM588 361h1v6h-1zM588 367h1v6h-1zM589 361h1v6h-1zM590 361h1v6h-1zM591 361h1v6h-1zM592 361h1v1h-1z M592 366h1v1h-1zM593 361h1v6h-1zM594 361h1v6h-1zM595 361h1v1h-1z M595 366h1v1h-1zM596 361h1v6h-1zM597 361h1v6h-1zM597 367h1v6h-1zM598 361h1v1h-1z M598 366h1v1h-1zM599 361h1v6h-1zM600 361h1v6h-1zM600 367h1v6h-1zM601 361h1v1h-1z M601 366h1v1h-1zM602 361h1v6h-1zM602 367h1v6h-1zM603 361h1v6h-1zM604 361h1v6h-1zM605 361h1v6h-1zM605 367h1v6h-1zM606 361h1v6h-1zM607 361h1v6h-1zM607 367h1v6h-1zM608 361h1v6h-1zM608 367h1v6h-1zM609 361h1v6h-1zM610 361h1v6h-1zM611 361h1v6h-1zM611 367h1v6h-1zM612 361h1v6h-1zM613 361h1v6h-1zM614 361h1v6h-1zM614 367h1v6h-1zM615 361h1v6h-1zM615 367h1v6h-1zM616 361h1v6h-1zM617 361h1v6h-1zM617 367h1v6h-1zM618 361h1v6h-1zM619 361h1v6h-1zM620 361h1v6h-1zM620 367h1v6h-1zM621 361h1v1h-1z M621 366h1v1h-1zM622 361h1v6h-1zM622 367h1v6h-1zM623 361h1v6h-1zM624 361h1v6h-1zM624 367h1v8h-1zM625 361h1v6h-1zM626 361h1v6h-1zM626 367h1v6h-1zM627 361h1v1h-1z M627 366h1v1h-1zM628 361h1v6h-1zM628 367h1v6h-1zM629 361h1v6h-1zM630 361h1v6h-1zM630 367h1v6h-1zM631 361h1v1h-1z M631 366h1v1h-1zM631 367h1v8h-1zM632 361h1v6h-1zM633 361h1v1h-1z M633 366h1v1h-1zM634 361h1v6h-1zM634 367h1v8h-1zM635 361h1v1h-1z M635 366h1v1h-1zM636 361h1v6h-1zM636 367h1v6h-1zM637 361h1v6h-1zM637 358h1v3h-1zM638 361h1v1h-1z M638 366h1v1h-1zM639 361h1v6h-1zM639 367h1v6h-1zM640 361h1v1h-1z M640 366h1v1h-1zM641 361h1v6h-1zM641 367h1v6h-1zM642 361h1v6h-1zM642 367h1v6h-1zM643 361h1v6h-1zM644 361h1v6h-1zM644 367h1v6h-1zM645 361h1v6h-1zM646 361h1v6h-1zM646 367h1v6h-1zM647 361h1v6h-1zM647 367h1v6h-1zM648 361h1v1h-1z M648 366h1v1h-1zM648 367h1v8h-1zM649 361h1v6h-1zM650 361h1v6h-1zM650 367h1v8h-1zM651 361h1v6h-1zM652 361h1v6h-1zM653 361h1v1h-1z M653 366h1v1h-1zM654 361h1v6h-1zM654 367h1v6h-1zM655 361h1v6h-1zM656 361h1v6h-1zM656 367h1v6h-1zM657 361h1v6h-1zM658 361h1v6h-1zM658 367h1v6h-1zM659 361h1v6h-1zM659 367h1v6h-1zM660 361h1v6h-1zM660 367h1v6h-1zM661 361h1v1h-1z M661 366h1v1h-1zM662 361h1v6h-1zM662 367h1v6h-1zM663 361h1v6h-1zM664 361h1v1h-1z M664 366h1v1h-1zM665 361h1v6h-1zM666 361h1v1h-1z M666 366h1v1h-1zM666 367h1v6h-1zM667 361h1v6h-1zM668 361h1v6h-1zM668 367h1v6h-1zM669 361h1v1h-1z M669 366h1v1h-1zM669 367h1v6h-1zM669 358h1v3h-1zM670 361h1v6h-1zM671 361h1v6h-1zM672 361h1v6h-1zM673 361h1v6h-1zM673 367h1v6h-1zM674 361h1v6h-1zM675 361h1v6h-1zM676 361h1v1h-1z M676 366h1v1h-1zM676 367h1v6h-1zM677 361h1v6h-1zM678 361h1v1h-1z M678 366h1v1h-1zM679 361h1v6h-1zM679 367h1v6h-1zM679 358h1v3h-1zM680 361h1v1h-1z M680 366h1v1h-1zM681 361h1v6h-1zM681 367h1v6h-1zM682 361h1v1h-1z M682 366h1v1h-1zM683 361h1v6h-1zM683 367h1v6h-1zM684 361h1v6h-1zM685 361h1v6h-1zM685 367h1v8h-1zM686 361h1v6h-1zM686 358h1v3h-1zM687 361h1v1h-1z M687 366h1v1h-1zM687 367h1v6h-1zM688 361h1v6h-1zM688 367h1v6h-1zM689 361h1v6h-1zM689 367h1v6h-1zM690 361h1v6h-1zM691 361h1v6h-1zM692 361h1v1h-1z M692 366h1v1h-1zM692 367h1v6h-1zM693 361h1v6h-1zM694 361h1v6h-1zM694 367h1v6h-1zM695 361h1v6h-1zM696 361h1v6h-1zM696 367h1v6h-1zM696 358h1v3h-1zM697 361h1v6h-1zM697 367h1v6h-1zM698 361h1v6h-1zM699 361h1v1h-1z M699 366h1v1h-1zM700 361h1v6h-1zM701 361h1v6h-1zM702 361h1v6h-1zM702 367h1v6h-1zM703 361h1v6h-1zM703 367h1v6h-1zM704 361h1v6h-1zM705 361h1v6h-1zM705 367h1v6h-1zM706 361h1v6h-1zM707 361h1v6h-1zM707 367h1v6h-1zM708 361h1v6h-1zM709 361h1v6h-1zM710 361h1v6h-1zM710 367h1v6h-1zM711 361h1v6h-1zM712 361h1v6h-1zM712 367h1v6h-1zM712 358h1v3h-1zM713 361h1v6h-1zM714 361h1v6h-1zM715 361h1v6h-1zM716 361h1v6h-1zM717 361h1v6h-1zM717 367h1v6h-1zM718 361h1v6h-1zM719 361h1v6h-1zM720 361h1v6h-1zM721 361h1v6h-1zM721 367h1v8h-1zM722 361h1v6h-1zM723 361h1v6h-1zM723 367h1v6h-1zM724 361h1v6h-1zM725 361h1v6h-1zM725 367h1v6h-1zM726 361h1v1h-1z M726 366h1v1h-1zM727 361h1v6h-1zM727 367h1v6h-1zM728 361h1v6h-1zM729 361h1v6h-1zM729 367h1v6h-1zM730 361h1v6h-1zM730 367h1v8h-1zM731 361h1v6h-1zM732 361h1v6h-1zM733 361h1v6h-1zM734 361h1v6h-1zM734 367h1v6h-1zM735 361h1v6h-1zM736 361h1v6h-1zM736 367h1v6h-1zM737 361h1v6h-1zM738 361h1v6h-1zM739 361h1v6h-1zM740 361h1v6h-1zM740 367h1v6h-1zM741 361h1v6h-1zM742 361h1v6h-1zM742 367h1v6h-1zM743 361h1v6h-1zM744 361h1v6h-1zM745 361h1v6h-1zM745 367h1v6h-1zM746 361h1v6h-1zM747 361h1v6h-1zM747 367h1v6h-1zM748 361h1v6h-1zM749 361h1v6h-1zM749 358h1v3h-1zM750 361h1v6h-1zM751 361h1v6h-1zM751 367h1v6h-1zM752 361h1v6h-1zM753 361h1v6h-1zM753 367h1v6h-1zM754 361h1v6h-1zM755 361h1v6h-1zM755 367h1v6h-1zM756 361h1v6h-1zM757 361h1v6h-1zM757 367h1v6h-1zM758 361h1v6h-1zM758 367h1v6h-1zM759 361h1v6h-1zM760 361h1v6h-1zM760 367h1v6h-1zM761 361h1v6h-1zM762 361h1v6h-1zM762 367h1v6h-1zM763 361h1v6h-1zM763 367h1v8h-1zM764 361h1v1h-1z M764 366h1v1h-1zM765 361h1v6h-1zM765 367h1v6h-1zM766 361h1v6h-1zM767 361h1v6h-1zM767 367h1v6h-1zM768 361h1v6h-1zM768 367h1v6h-1zM769 361h1v6h-1zM770 361h1v6h-1zM770 367h1v6h-1zM771 361h1v6h-1zM771 358h1v3h-1zM772 361h1v6h-1zM772 367h1v6h-1zM773 361h1v6h-1zM774 361h1v6h-1zM774 367h1v6h-1zM775 361h1v6h-1zM775 367h1v6h-1zM776 361h1v6h-1zM776 358h1v3h-1zM777 361h1v6h-1zM778 361h1v6h-1zM778 367h1v6h-1zM779 361h1v6h-1zM780 361h1v6h-1zM781 361h1v6h-1zM781 367h1v6h-1zM782 361h1v6h-1zM782 367h1v8h-1zM783 361h1v6h-1zM784 361h1v6h-1zM784 367h1v6h-1zM785 361h1v6h-1zM786 361h1v6h-1zM786 367h1v6h-1zM787 361h1v6h-1zM788 361h1v6h-1zM789 361h1v6h-1zM790 361h1v6h-1zM791 361h1v6h-1zM791 367h1v8h-1zM792 361h1v6h-1zM793 361h1v6h-1zM793 367h1v6h-1zM794 361h1v6h-1zM794 367h1v6h-1zM795 361h1v6h-1zM796 361h1v6h-1zM797 361h1v6h-1zM797 367h1v6h-1zM798 361h1v6h-1zM799 361h1v6h-1zM799 367h1v6h-1zM800 361h1v6h-1zM800 367h1v6h-1zM801 361h1v6h-1zM802 361h1v6h-1zM803 361h1v1h-1z M803 366h1v1h-1zM803 367h1v6h-1zM804 361h1v6h-1zM805 361h1v6h-1zM805 367h1v6h-1zM806 361h1v6h-1zM807 361h1v6h-1zM807 367h1v6h-1zM808 361h1v6h-1zM809 361h1v6h-1zM809 367h1v6h-1zM810 361h1v6h-1zM810 367h1v6h-1zM811 361h1v6h-1zM812 361h1v6h-1zM813 361h1v6h-1zM814 361h1v6h-1zM814 367h1v8h-1zM815 361h1v6h-1zM816 361h1v6h-1zM816 367h1v6h-1zM817 361h1v6h-1zM817 367h1v6h-1zM818 361h1v6h-1zM819 361h1v6h-1zM820 361h1v6h-1zM820 367h1v6h-1zM821 361h1v6h-1zM822 361h1v6h-1zM823 361h1v6h-1zM824 361h1v6h-1zM824 367h1v6h-1zM825 361h1v6h-1zM826 361h1v6h-1zM826 367h1v6h-1zM827 361h1v6h-1zM828 361h1v6h-1zM828 367h1v6h-1zM829 361h1v6h-1zM830 361h1v6h-1zM831 361h1v6h-1zM831 367h1v8h-1zM832 361h1v6h-1zM832 367h1v6h-1zM833 361h1v6h-1zM834 361h1v6h-1zM835 361h1v6h-1zM836 361h1v6h-1zM836 367h1v6h-1zM837 361h1v6h-1zM838 361h1v6h-1zM838 367h1v6h-1zM839 361h1v6h-1zM840 361h1v6h-1zM841 361h1v6h-1zM841 358h1v3h-1zM842 361h1v6h-1zM842 367h1v6h-1zM843 361h1v6h-1zM844 361h1v6h-1zM845 361h1v6h-1zM845 367h1v8h-1zM846 361h1v6h-1zM847 361h1v6h-1zM847 367h1v6h-1zM848 361h1v6h-1zM849 361h1v6h-1zM850 361h1v6h-1zM850 367h1v6h-1zM851 361h1v6h-1zM851 367h1v6h-1zM852 361h1v1h-1z M852 366h1v1h-1zM852 367h1v6h-1zM853 361h1v6h-1zM854 361h1v6h-1zM855 361h1v6h-1zM856 361h1v6h-1zM856 367h1v6h-1zM857 361h1v6h-1zM857 367h1v6h-1zM858 361h1v1h-1z M858 366h1v1h-1zM859 361h1v6h-1zM860 361h1v6h-1zM860 367h1v6h-1zM861 361h1v6h-1zM862 361h1v1h-1z M862 366h1v1h-1zM863 361h1v6h-1zM864 361h1v6h-1zM865 361h1v6h-1zM866 361h1v6h-1zM867 361h1v6h-1zM867 367h1v6h-1zM868 361h1v6h-1zM869 361h1v6h-1zM869 367h1v6h-1z" fill="#f0f000"/><path d="M98 361h11.8l5.1 5.5l-5.1 5.5h-11.8z" fill="#f8f800" stroke="#181800" stroke-width="0.6" shape-rendering="auto"/><path d="M106 363.2h2v8.8h-2z M103 365.3l3-2.1v1.8l-2.6 1.3z" fill="#000" shape-rendering="auto"/><path d="M891 360.8h-12l-5.4 5.7l5.4 5.5h12z" fill="#f8f800" stroke="#181800" stroke-width="0.6" shape-rendering="auto"/><path d="M882.2 363h5.7v1.1h-5.7z M884.4 364h1.8v6.6h-1.8z" fill="#202000" shape-rendering="auto"/></svg>
<div class="r" style="left:898px;top:66px;width:4px;height:557px;background:#f7f7fb"></div>
<div class="r" style="left:902px;top:64px;width:215px;height:20px;background:linear-gradient(#bccad9,#d7e2ef)"></div>
<div class="r" style="left:902px;top:84px;width:215px;height:1px;background:#eef2f7"></div>
<div class="r" style="left:902px;top:85px;width:215px;height:1px;background:#a0a0a4"></div>
<div class="r" style="left:902px;top:86px;width:215px;height:21px;background:#e4e4e4"></div>
<div class="r" style="left:902px;top:107px;width:215px;height:1px;background:#a0a0a4"></div>
<div class="r" style="left:902px;top:108px;width:215px;height:24px;background:linear-gradient(#f6f8fd,#eef0f8 30%,#c8cad8 90%,#b8bacc)"></div>
<div class="r" style="left:902px;top:132px;width:215px;height:491px;background:#f0f0f0"></div>
<div class="r" style="left:902px;top:86px;width:1px;height:537px;background:#d8d8dc"></div>
<div class="t " style="left:906.60px;top:69.10px;font-size:11.7px;color:#000;">Control Panel</div>
<div class="t " style="left:906.50px;top:90.90px;font-size:11.7px;color:#000;">Scope</div>
<div class="r" style="left:907px;top:144px;width:203px;height:118px;border:1px solid #d5d5d5;box-shadow:inset 1px 1px 0 #fff"></div>
<div class="r" style="left:983.5px;top:138px;width:51.71821875px;height:12px;background:#f0f0f0"></div>
<div class="t " style="left:985.50px;top:139.03px;font-size:10.6px;color:#1a1a1a;">Horizontal</div>
<div class="t " style="left:917.50px;top:159.58px;font-size:10.3px;color:#1a1a1a;letter-spacing:-0.35px">Time/DIV</div>
<div class="r" style="left:916px;top:176px;width:74px;height:22px;background:#e5e5e5;border:1px solid #adadad"></div>
<div class="t " style="left:920.00px;top:182.70px;font-size:10.4px;color:#000;">2.000ms</div>
<svg style="left:976px;top:185px" width="9" height="6" viewBox="0 0 9 6"><path d="M0.5 0.8 L4.5 4.8 L8.5 0.8" stroke="#444" stroke-width="1.1" fill="none"/></svg>
<div class="t " style="left:917.50px;top:209.50px;font-size:10.4px;color:#1a1a1a;">Format</div>
<div class="r" style="left:916px;top:228px;width:74px;height:22px;background:#e5e5e5;border:1px solid #adadad"></div>
<div class="t " style="left:920.00px;top:234.70px;font-size:10.4px;color:#000;">Y-T</div>
<svg style="left:976px;top:237px" width="9" height="6" viewBox="0 0 9 6"><path d="M0.5 0.8 L4.5 4.8 L8.5 0.8" stroke="#444" stroke-width="1.1" fill="none"/></svg>
<div class="r" style="left:907px;top:281px;width:203px;height:284px;border:1px solid #d5d5d5;box-shadow:inset 1px 1px 0 #fff"></div>
<div class="r" style="left:989.4px;top:275px;width:38.75971875px;height:12px;background:#f0f0f0"></div>
<div class="t " style="left:991.40px;top:276.03px;font-size:10.6px;color:#1a1a1a;">Vertical</div>
<div class="r" style="left:916px;top:298px;width:13px;height:13px;background:#fff;border:1px solid #333"></div>
<svg style="left:916px;top:298px" width="13" height="13" viewBox="0 0 13 13"><path d="M2.5 6.5 L5.2 9.3 L10.5 3.2" stroke="#222" stroke-width="1.3" fill="none"/></svg>
<div class="t " style="left:932.00px;top:301.00px;font-size:10.4px;color:#1a1a1a;">CH1</div>
<div class="r" style="left:916px;top:319px;width:74px;height:22px;background:#e5e5e5;border:1px solid #adadad"></div>
<div class="t " style="left:920.00px;top:325.70px;font-size:10.4px;color:#000;">500mV</div>
<svg style="left:976px;top:328px" width="9" height="6" viewBox="0 0 9 6"><path d="M0.5 0.8 L4.5 4.8 L8.5 0.8" stroke="#444" stroke-width="1.1" fill="none"/></svg>
<div class="r" style="left:916px;top:354px;width:74px;height:22px;background:#d7d7d7;border:1px solid #cccccc"></div>
<div class="t " style="left:920.00px;top:360.70px;font-size:10.4px;color:#9c9c9c;">DC</div>
<svg style="left:976px;top:363px" width="9" height="6" viewBox="0 0 9 6"><path d="M0.5 0.8 L4.5 4.8 L8.5 0.8" stroke="#b0b0b0" stroke-width="1.1" fill="none"/></svg>
<div class="r" style="left:916px;top:389px;width:74px;height:22px;background:#e5e5e5;border:1px solid #adadad"></div>
<div class="t " style="left:920.00px;top:395.70px;font-size:10.4px;color:#000;">x10</div>
<svg style="left:976px;top:398px" width="9" height="6" viewBox="0 0 9 6"><path d="M0.5 0.8 L4.5 4.8 L8.5 0.8" stroke="#444" stroke-width="1.1" fill="none"/></svg>
<div class="r" style="left:1027px;top:396px;width:13px;height:13px;background:#fff;border:1px solid #333"></div>
<div class="t " style="left:1043.40px;top:398.53px;font-size:10.6px;color:#1a1a1a;">Invert</div>
<div class="r" style="left:916px;top:438px;width:13px;height:13px;background:#fff;border:1px solid #333"></div>
<div class="t " style="left:932.00px;top:440.40px;font-size:10.4px;color:#1a1a1a;">CH2</div>
<div class="r" style="left:916px;top:459px;width:74px;height:22px;background:#d7d7d7;border:1px solid #cccccc"></div>
<div class="t " style="left:920.00px;top:465.70px;font-size:10.4px;color:#9c9c9c;">1.00V</div>
<svg style="left:976px;top:468px" width="9" height="6" viewBox="0 0 9 6"><path d="M0.5 0.8 L4.5 4.8 L8.5 0.8" stroke="#b0b0b0" stroke-width="1.1" fill="none"/></svg>
<div class="r" style="left:916px;top:494px;width:74px;height:22px;background:#d7d7d7;border:1px solid #cccccc"></div>
<div class="t " style="left:920.00px;top:500.70px;font-size:10.4px;color:#9c9c9c;">DC</div>
<svg style="left:976px;top:503px" width="9" height="6" viewBox="0 0 9 6"><path d="M0.5 0.8 L4.5 4.8 L8.5 0.8" stroke="#b0b0b0" stroke-width="1.1" fill="none"/></svg>
<div class="r" style="left:916px;top:529px;width:74px;height:22px;background:#d7d7d7;border:1px solid #cccccc"></div>
<div class="t " style="left:920.00px;top:535.70px;font-size:10.4px;color:#9c9c9c;">x10</div>
<svg style="left:976px;top:538px" width="9" height="6" viewBox="0 0 9 6"><path d="M0.5 0.8 L4.5 4.8 L8.5 0.8" stroke="#b0b0b0" stroke-width="1.1" fill="none"/></svg>
<div class="r" style="left:1027px;top:536px;width:13px;height:13px;background:#fff;border:1px solid #c8c8c8"></div>
<div class="t " style="left:1043.50px;top:538.53px;font-size:10.6px;color:#a0a0a0;">Invert</div>
<div class="r" style="left:907px;top:584px;width:203px;height:60px;border:1px solid #d5d5d5;box-shadow:inset 1px 1px 0 #fff"></div>
<div class="r" style="left:990.2px;top:578px;width:37.17965625px;height:12px;background:#f0f0f0"></div>
<div class="t " style="left:992.20px;top:579.03px;font-size:10.6px;color:#1a1a1a;">Trigger</div>
<div class="t " style="left:920.50px;top:611.41px;font-size:10.5px;color:#1a1a1a;">Trigger Mode</div>
<div class="r" style="left:1016px;top:606px;width:74px;height:20px;background:#e5e5e5;border:1px solid #adadad"></div>
<div class="t " style="left:1020.00px;top:611.18px;font-size:11.6px;color:#000;">Edge</div>
<svg style="left:1075px;top:615px" width="9" height="6" viewBox="0 0 9 6"><path d="M0.5 0.8 L4.5 4.8 L8.5 0.8" stroke="#444" stroke-width="1.1" fill="none"/></svg>
<svg style="left:1010.5px;top:169.3px" width="80" height="80" viewBox="1010.5 169.3 80 80"><g transform="translate(0 6.279) scale(1 0.97)">
<path d="M1024.76 235.04 A36.4 36.4 0 1 1 1076.24 235.04" fill="#f8f8f8" stroke="#000" stroke-width="1.1"/>
<circle cx="1050.5" cy="209.3" r="34" fill="#c6c6c6" stroke="#000" stroke-width="1.1"/>
<circle cx="1050.5" cy="209.3" r="27.9" fill="#0808d0" stroke="#00007a" stroke-width="1.1"/>
<path d="M1018.9 240.20000000000002 L1027.4 233.0 M1082.1 240.20000000000002 L1073.6 233.0 M1071.0 189.0 L1074.5 186.3" stroke="#000" stroke-width="1.2"/>
<path d="M1051.2 204 L1052.2 186.2" stroke="#ffffff" stroke-width="2.1"/>
</g></svg>
<svg style="left:1010.5px;top:304.3px" width="80" height="80" viewBox="1010.5 304.3 80 80"><g transform="translate(0 10.329) scale(1 0.97)">
<path d="M1024.76 370.04 A36.4 36.4 0 1 1 1076.24 370.04" fill="#f8f8f8" stroke="#000" stroke-width="1.1"/>
<circle cx="1050.5" cy="344.3" r="34" fill="#c6c6c6" stroke="#000" stroke-width="1.1"/>
<circle cx="1050.5" cy="344.3" r="27.9" fill="#ffff00" stroke="#1a1a00" stroke-width="1.1"/>
<path d="M1018.9 375.2 L1027.4 368.0 M1082.1 375.2 L1073.6 368.0 M1071.0 324.0 L1074.5 321.3" stroke="#000" stroke-width="1.2"/>
<path d="M1056.1 346.15562 L1071 347.90815" stroke="#f4eca0" stroke-width="2.1"/>
</g></svg>
<svg style="left:1010.5px;top:446.2px" width="80" height="80" viewBox="1010.5 446.2 80 80"><g transform="translate(0 14.586) scale(1 0.97)">
<path d="M1024.76 511.94 A36.4 36.4 0 1 1 1076.24 511.94" fill="#f8f8f8" stroke="#000" stroke-width="1.1"/>
<circle cx="1050.5" cy="486.2" r="34" fill="#c6c6c6" stroke="#000" stroke-width="1.1"/>
<circle cx="1050.5" cy="486.2" r="27.9" fill="#9a9a9a" stroke="#111111" stroke-width="1.1"/>
<path d="M1018.9 517.1 L1027.4 509.9 M1082.1 517.1 L1073.6 509.9 M1071.0 465.9 L1074.5 463.2" stroke="#000" stroke-width="1.2"/>
<path d="M1056.1 483.51966 L1071.4 477.02499" stroke="#f0f0c8" stroke-width="2.1"/>
</g></svg>
<div class="r" style="left:90px;top:623px;width:1027px;height:4px;background:#f2f5fa"></div>
<div class="r" style="left:90px;top:627px;width:1027px;height:20px;background:linear-gradient(#c0cedc,#d3dfec)"></div>
<div class="t " style="left:94.70px;top:631.34px;font-size:12px;color:#000;">Output</div>
<div class="r" style="left:90px;top:647px;width:1027px;height:340px;background:#fff"></div>
<div class="r" style="left:90px;top:647px;width:19px;height:322px;background:#f0f0f0"></div>
<div class="r" style="left:223px;top:647px;width:1px;height:340px;background:#e8e8e8"></div>
<div class="r" style="left:109px;top:665px;width:1008px;height:1px;background:#ececec"></div>
<div class="t " style="left:113.50px;top:649.54px;font-size:12px;color:#000;">Maximum</div>
<div class="t " style="left:228.00px;top:650.05px;font-size:11.4px;color:#000;">125mV</div>
<div class="r" style="left:109px;top:684px;width:1008px;height:1px;background:#ececec"></div>
<div class="t " style="left:113.50px;top:668.54px;font-size:12px;color:#000;">Minimum</div>
<div class="t " style="left:228.00px;top:669.05px;font-size:11.4px;color:#000;">-78.4mV</div>
<div class="r" style="left:109px;top:703px;width:1008px;height:1px;background:#ececec"></div>
<div class="t " style="left:113.50px;top:687.54px;font-size:12px;color:#000;">Peak to Peak</div>
<div class="t " style="left:228.00px;top:688.05px;font-size:11.4px;color:#000;">204mV</div>
<div class="r" style="left:109px;top:722px;width:1008px;height:1px;background:#ececec"></div>
<div class="t " style="left:113.50px;top:706.54px;font-size:12px;color:#000;">Top</div>
<div class="t " style="left:228.00px;top:707.05px;font-size:11.4px;color:#000;">125mV</div>
<div class="r" style="left:109px;top:741px;width:1008px;height:1px;background:#ececec"></div>
<div class="t " style="left:113.50px;top:725.54px;font-size:12px;color:#000;">Base</div>
<div class="t " style="left:228.00px;top:726.05px;font-size:11.4px;color:#000;">-78.4mV</div>
<div class="r" style="left:109px;top:760px;width:1008px;height:1px;background:#ececec"></div>
<div class="t " style="left:113.50px;top:744.54px;font-size:12px;color:#000;">Middle</div>
<div class="t " style="left:228.00px;top:745.05px;font-size:11.4px;color:#000;">23.5mV</div>
<div class="r" style="left:109px;top:779px;width:1008px;height:1px;background:#ececec"></div>
<div class="t " style="left:113.50px;top:763.54px;font-size:12px;color:#000;">RMS</div>
<div class="t " style="left:228.00px;top:764.05px;font-size:11.4px;color:#000;">38.8mV</div>
<div class="r" style="left:109px;top:798px;width:1008px;height:1px;background:#ececec"></div>
<div class="t " style="left:113.50px;top:782.54px;font-size:12px;color:#000;">Amplitude</div>
<div class="t " style="left:228.00px;top:783.05px;font-size:11.4px;color:#000;">204mV</div>
<div class="r" style="left:109px;top:817px;width:1008px;height:1px;background:#ececec"></div>
<div class="t " style="left:113.50px;top:801.54px;font-size:12px;color:#000;">Mean</div>
<div class="t " style="left:228.00px;top:802.05px;font-size:11.4px;color:#000;">23.1mV</div>
<div class="r" style="left:109px;top:836px;width:1008px;height:1px;background:#ececec"></div>
<div class="t " style="left:113.50px;top:820.54px;font-size:12px;color:#000;">Cycle Mean</div>
<div class="t " style="left:228.00px;top:821.05px;font-size:11.4px;color:#000;">0.00uV</div>
<div class="r" style="left:109px;top:855px;width:1008px;height:1px;background:#ececec"></div>
<div class="t " style="left:113.50px;top:839.54px;font-size:12px;color:#000;">Positive Overshoot</div>
<div class="t " style="left:228.00px;top:840.05px;font-size:11.4px;color:#000;letter-spacing:0.4px">*****</div>
<div class="r" style="left:109px;top:874px;width:1008px;height:1px;background:#ececec"></div>
<div class="t " style="left:113.50px;top:858.54px;font-size:12px;color:#000;">Negative Overshoot</div>
<div class="t " style="left:228.00px;top:859.05px;font-size:11.4px;color:#000;letter-spacing:0.4px">*****</div>
<div class="r" style="left:109px;top:893px;width:1008px;height:1px;background:#ececec"></div>
<div class="t " style="left:113.50px;top:877.54px;font-size:12px;color:#000;">Frequency</div>
<div class="t " style="left:228.00px;top:878.05px;font-size:11.4px;color:#000;letter-spacing:0.4px">*****</div>
<div class="r" style="left:109px;top:912px;width:1008px;height:1px;background:#ececec"></div>
<div class="t " style="left:113.50px;top:896.54px;font-size:12px;color:#000;">+ Duty Cycle</div>
<div class="t " style="left:228.00px;top:897.05px;font-size:11.4px;color:#000;letter-spacing:0.4px">*****</div>
<div class="r" style="left:109px;top:931px;width:1008px;height:1px;background:#ececec"></div>
<div class="t " style="left:113.50px;top:915.54px;font-size:12px;color:#000;">- Duty Cycle</div>
<div class="t " style="left:228.00px;top:916.05px;font-size:11.4px;color:#000;letter-spacing:0.4px">*****</div>
<div class="r" style="left:109px;top:950px;width:1008px;height:1px;background:#ececec"></div>
<div class="t " style="left:113.50px;top:934.54px;font-size:12px;color:#000;">+ Pulse Width</div>
<div class="t " style="left:228.00px;top:935.05px;font-size:11.4px;color:#000;letter-spacing:0.4px">*****</div>
<div class="r" style="left:109px;top:969px;width:1008px;height:1px;background:#ececec"></div>
<div class="t " style="left:113.50px;top:953.54px;font-size:12px;color:#000;">- Pulse Width</div>
<div class="t " style="left:228.00px;top:954.05px;font-size:11.4px;color:#000;letter-spacing:0.4px">*****</div>
<div class="r" style="left:90px;top:987px;width:1027px;height:1px;background:#d8d8d8"></div>
<div class="r" style="left:0px;top:988px;width:1117px;height:16px;background:#f0f0f0"></div>
<div class="t " style="left:1056.00px;top:992.93px;font-size:11.3px;color:#000;">26-05-2017</div>
</body></html>
